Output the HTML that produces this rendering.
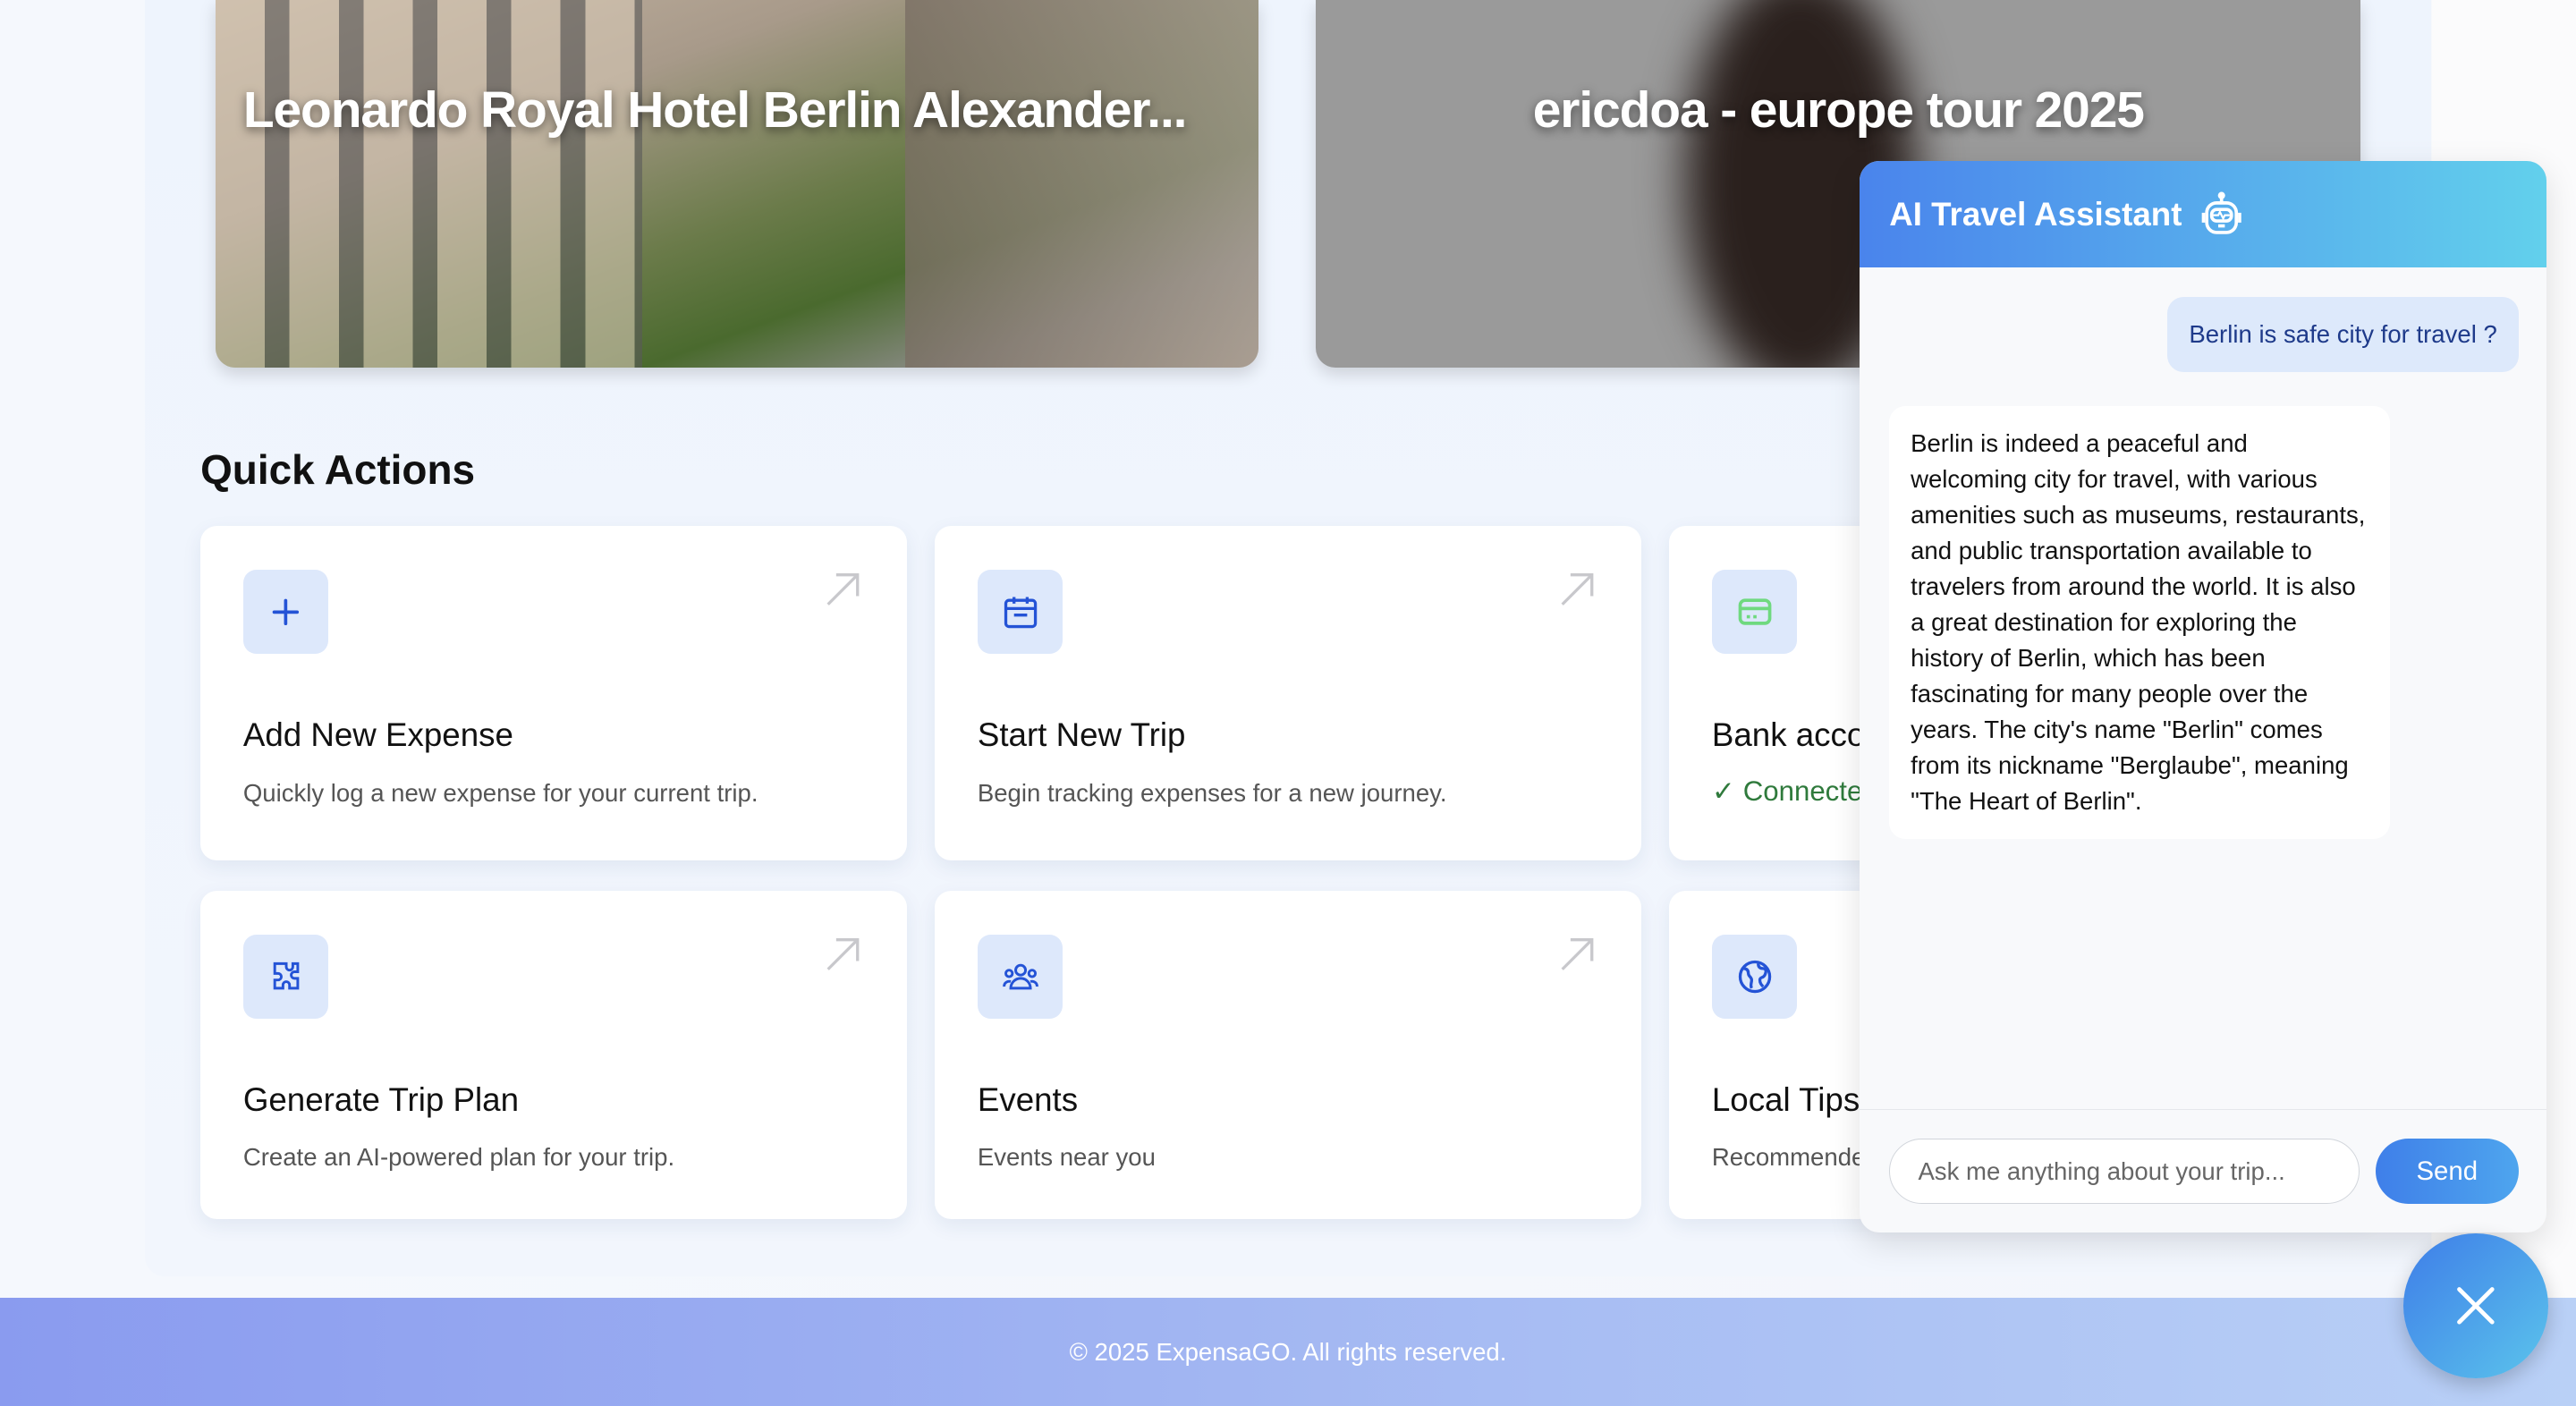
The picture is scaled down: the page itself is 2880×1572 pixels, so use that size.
<!DOCTYPE html><html><head><meta charset="utf-8"><style>
*{box-sizing:border-box;margin:0;padding:0}
html,body{width:2880px;height:1572px;overflow:hidden}
body{font-family:"Liberation Sans",sans-serif;background:#f6f8fd}
#w{zoom:1.83673;width:1568px;height:856px;position:relative;overflow:hidden;background:linear-gradient(90deg,#f5f8fd,#f3f6fc 1480px,#fbfbfc 1480px)}
.main{position:absolute;left:88px;top:0;width:1392px;height:777px;background:linear-gradient(180deg,#eef4fd,#f2f6fd);border-radius:0 0 0 12px}
.img{position:absolute;top:0;height:224px;border-radius:0 0 12px 12px;overflow:hidden;box-shadow:0 4px 10px rgba(0,0,0,.15)}
.img h2{position:absolute;left:0;right:0;top:49px;color:#fff;font-size:31px;font-weight:bold;text-shadow:0 2px 6px rgba(0,0,0,.5);letter-spacing:-.6px}
.qa{position:absolute;left:122px;top:271px;font-size:25px;font-weight:600;color:#111}
.card{position:absolute;width:430px;height:204px;background:#fff;border-radius:10px;box-shadow:0 4px 12px rgba(30,60,120,.08)}
.ic{position:absolute;left:26px;top:27px;width:52px;height:51px;background:#dde8fb;border-radius:8px;display:flex;align-items:center;justify-content:center}
.card h3{position:absolute;left:26px;top:116px;font-size:20px;font-weight:normal;color:#111}
.card p{position:absolute;left:26px;top:154px;font-size:15px;color:#555}
.ar{position:absolute;right:28px;top:28px}
.chat{position:absolute;left:1132px;top:98px;width:418px;height:652px;background:#f8f9fb;border-radius:12px;box-shadow:0 6px 20px rgba(0,0,0,.12);overflow:hidden}
.hd{height:65px;background:linear-gradient(90deg,#4a84ec,#62d0ec);color:#fff;font-size:20px;font-weight:bold;padding:20px 18px;display:flex;align-items:center;gap:10px}
.ub{position:absolute;right:17px;top:83px;background:#dde9fb;color:#1e3a8a;font-size:15px;padding:14px 13px;border-radius:10px}
.bb{position:absolute;left:18px;top:149px;width:305px;background:#fff;color:#111;font-size:15px;line-height:21.8px;padding:12px 13px;border-radius:10px}
.ft{position:absolute;left:0;right:0;top:577px;border-top:1px solid #e5e7eb}
.in{position:absolute;left:18px;top:595px;width:286px;height:40px;border:1px solid #d1d5db;border-radius:20px;background:#fff;font-size:15px;color:#666;padding:11px 17px}
.sd{position:absolute;left:314px;top:595px;width:87px;height:40px;border-radius:20px;background:linear-gradient(90deg,#3f7fe9,#4ea5ee);color:#fff;font-size:16px;text-align:center;line-height:40px}
.cl{position:absolute;left:1463px;top:751px;width:88px;height:88px;border-radius:50%;background:linear-gradient(135deg,#3e7de8,#5bc4ec);box-shadow:0 4px 12px rgba(0,0,0,.2);display:flex;align-items:center;justify-content:center}
.foot{position:absolute;left:0;top:790px;width:1568px;height:66px;background:linear-gradient(90deg,#8a9bef,#a8bdf3 60%,#b9d0f6);color:#fff;font-size:15px;text-align:center;line-height:66px}
</style></head><body><div id="w">
<div class="main"></div>
<div class="img" style="left:131px;width:635px;background:linear-gradient(160deg,#c7b7a5 0%,#a89a8a 30%,#6b7b4a 55%,#4a6a2e 70%,#8c8c88 85%,#bba99a 100%)">
<div style="position:absolute;left:0;top:0;width:260px;height:224px;background:repeating-linear-gradient(90deg,#d6c8b5 0 30px,#5a5a5a 30px 45px),#ccc;opacity:.6"></div>
<div style="position:absolute;left:420px;top:0;width:215px;height:224px;background:linear-gradient(90deg,#7a6f64,#a59b90);opacity:.8"></div>
<h2 style="left:17px;text-align:left">Leonardo Royal Hotel Berlin Alexander...</h2></div>
<div class="img" style="left:801px;width:636px;background:#9a9a9a">
<div style="position:absolute;left:225px;top:-20px;width:140px;height:260px;border-radius:50%;background:#2a201d;filter:blur(14px)"></div>
<h2 style="text-align:center">ericdoa - europe tour 2025</h2></div>
<div class="qa">Quick Actions</div>

<div class="card" style="left:122px;top:320px"><div class="ic"><svg width="20" height="20" viewBox="0 0 20 20"><path d="M10 3v14M3 10h14" stroke="#2453d6" stroke-width="2" stroke-linecap="round"/></svg></div><svg class="ar" width="22" height="22" viewBox="0 0 22 22"><path d="M2 20L20 2M7 2h13v13" stroke="#c8c8cc" stroke-width="1.8" fill="none"/></svg><h3>Add New Expense</h3><p>Quickly log a new expense for your current trip.</p></div>
<div class="card" style="left:569px;top:320px"><div class="ic"><svg width="24" height="24" viewBox="0 0 24 24" fill="none" stroke="#2453d6" stroke-width="1.8"><rect x="3" y="5" width="18" height="16" rx="2"/><path d="M3 10h18M8 3v4M16 3v4M8 14h8"/></svg></div><svg class="ar" width="22" height="22" viewBox="0 0 22 22"><path d="M2 20L20 2M7 2h13v13" stroke="#c8c8cc" stroke-width="1.8" fill="none"/></svg><h3>Start New Trip</h3><p>Begin tracking expenses for a new journey.</p></div>
<div class="card" style="left:1016px;top:320px"><div class="ic"><svg width="24" height="24" viewBox="0 0 24 24" fill="none" stroke="#6fd97f" stroke-width="2"><rect x="3" y="5" width="18" height="14" rx="3"/><path d="M3 10h18M7 15h2M11 15h2"/></svg></div><h3>Bank accounts</h3><p style="color:#2f7a3c;font-size:17px;top:152px">✓ Connected</p></div>
<div class="card" style="left:122px;top:542px;height:200px"><div class="ic"><svg width="24" height="24" viewBox="0 0 24 24" fill="none" stroke="#2453d6" stroke-width="1.6"><path d="M8 4h4v2a2 2 0 004 0V4h3v5h-2a2 2 0 000 4h2v6h-5v-2a2 2 0 00-4 0v2H5v-5h2a2 2 0 000-4H5V4z"/></svg></div><svg class="ar" width="22" height="22" viewBox="0 0 22 22"><path d="M2 20L20 2M7 2h13v13" stroke="#c8c8cc" stroke-width="1.8" fill="none"/></svg><h3>Generate Trip Plan</h3><p>Create an AI-powered plan for your trip.</p></div>
<div class="card" style="left:569px;top:542px;height:200px"><div class="ic"><svg width="24" height="24" viewBox="0 0 24 24" fill="none" stroke="#2453d6" stroke-width="1.6"><circle cx="12" cy="8" r="3"/><circle cx="5" cy="10" r="2"/><circle cx="19" cy="10" r="2"/><path d="M6 19a6 6 0 0112 0zM2 18a3 3 0 014-3M22 18a3 3 0 00-4-3"/></svg></div><svg class="ar" width="22" height="22" viewBox="0 0 22 22"><path d="M2 20L20 2M7 2h13v13" stroke="#c8c8cc" stroke-width="1.8" fill="none"/></svg><h3>Events</h3><p>Events near you</p></div>
<div class="card" style="left:1016px;top:542px;height:200px"><div class="ic"><svg width="24" height="24" viewBox="0 0 24 24" fill="none" stroke="#2453d6" stroke-width="1.8"><circle cx="12" cy="12" r="9"/><path d="M5 7c2 0 3 1 3 3s2 2 2 4-1 3 0 5M14 4c0 2 1 3 3 3s2 2 1 4-3 1-3 3 1 3 2 4"/></svg></div><h3>Local Tips</h3><p>Recommended</p></div>

<div class="chat"><div class="hd">AI Travel Assistant <svg width="28" height="28" viewBox="0 0 28 28" fill="none" stroke="#fff" stroke-width="2"><path d="M14 2v4"/><circle cx="14" cy="2.5" r="1.2" fill="#fff"/><rect x="5" y="7" width="18" height="18" rx="6"/><rect x="8" y="11" width="12" height="7" rx="3"/><path d="M9 14.5h3l1-2 2 4 1-2h3" stroke-width="1.2"/><path d="M12 21h4"/><path d="M3 13v6M25 13v6"/></svg></div>
<div class="ub">Berlin is safe city for travel ?</div>
<div class="bb">Berlin is indeed a peaceful and welcoming city for travel, with various amenities such as museums, restaurants, and public transportation available to travelers from around the world. It is also a great destination for exploring the history of Berlin, which has been fascinating for many people over the years. The city's name "Berlin" comes from its nickname "Berglaube", meaning "The Heart of Berlin".</div>
<div class="ft"></div><div class="in">Ask me anything about your trip...</div><div class="sd">Send</div></div>
<div class="foot">© 2025 ExpensaGO. All rights reserved.</div>
<div class="cl"><svg width="26" height="26" viewBox="0 0 26 26"><path d="M3 3l20 20M23 3L3 23" stroke="#fff" stroke-width="2.6" stroke-linecap="round"/></svg></div>
</div></body></html>
